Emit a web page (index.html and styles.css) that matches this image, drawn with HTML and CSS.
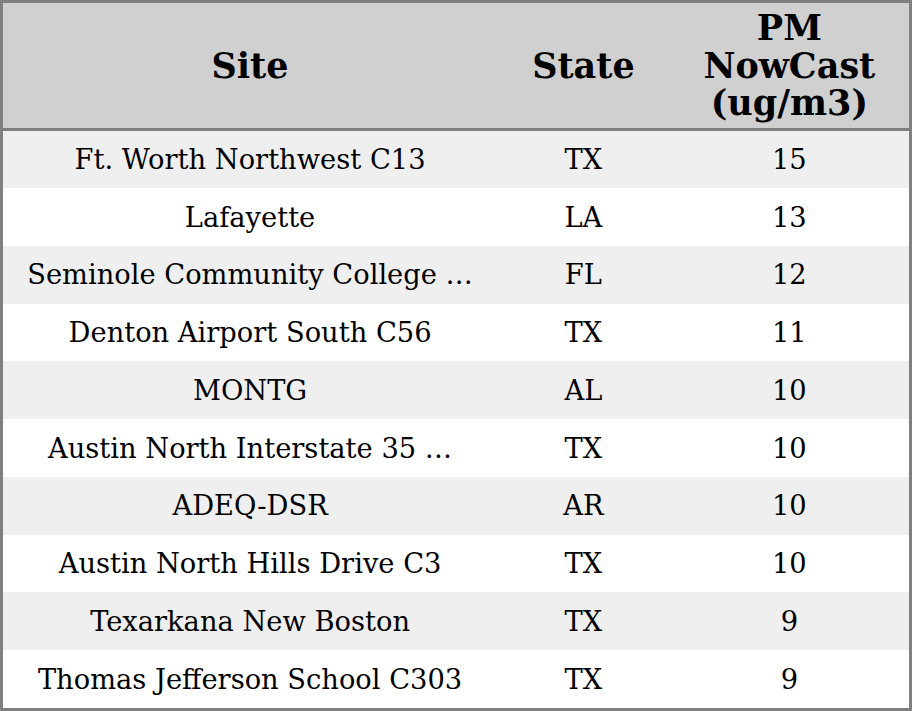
FILE: index.html
```html
<!DOCTYPE html>
<html>
<head>
<meta charset="utf-8">
<link rel="stylesheet" href="styles.css">
</head>
<body>
<table class="aq">
  <colgroup><col class="c-site"><col class="c-state"><col class="c-pm"></colgroup>
  <thead>
    <tr><th>Site</th><th>State</th><th>PM<br>NowCast<br>(ug/m3)</th></tr>
  </thead>
  <tbody>
    <tr><td>Ft. Worth Northwest C13</td><td>TX</td><td>15</td></tr>
    <tr><td>Lafayette</td><td>LA</td><td>13</td></tr>
    <tr><td>Seminole Community College …</td><td>FL</td><td>12</td></tr>
    <tr><td>Denton Airport South C56</td><td>TX</td><td>11</td></tr>
    <tr><td>MONTG</td><td>AL</td><td>10</td></tr>
    <tr><td>Austin North Interstate 35 …</td><td>TX</td><td>10</td></tr>
    <tr><td>ADEQ-DSR</td><td>AR</td><td>10</td></tr>
    <tr><td>Austin North Hills Drive C3</td><td>TX</td><td>10</td></tr>
    <tr><td>Texarkana New Boston</td><td>TX</td><td>9</td></tr>
    <tr><td>Thomas Jefferson School C303</td><td>TX</td><td>9</td></tr>
  </tbody>
</table>
</body>
</html>
```
FILE: styles.css
```css
html, body { margin: 0; padding: 0; background: #fff; }
.aq {
  width: 912px;
  height: 711px;
  border-collapse: collapse;
  table-layout: fixed;
  border: 3px solid #808080;
  font-family: "DejaVu Serif", serif;
  color: #000;
}
.c-site { width: 494px; }
.c-state { width: 172px; }
.c-pm { width: 240px; }
.aq th {
  background: #d0d0d0;
  font-size: 35px;
  font-weight: bold;
  line-height: 37.5px;
  height: 109px;
  padding: 6px 0;
  text-align: center;
  vertical-align: middle;
  border-bottom: 3px solid #808080;
}
.aq td {
  font-size: 27.3px;
  text-align: center;
  vertical-align: middle;
  padding: 0;
  height: 57.7px;
  white-space: nowrap;
}
.aq tbody tr:nth-child(odd) td { background: #efefef; }
.aq tbody tr:nth-child(even) td { background: #fff; }
```
